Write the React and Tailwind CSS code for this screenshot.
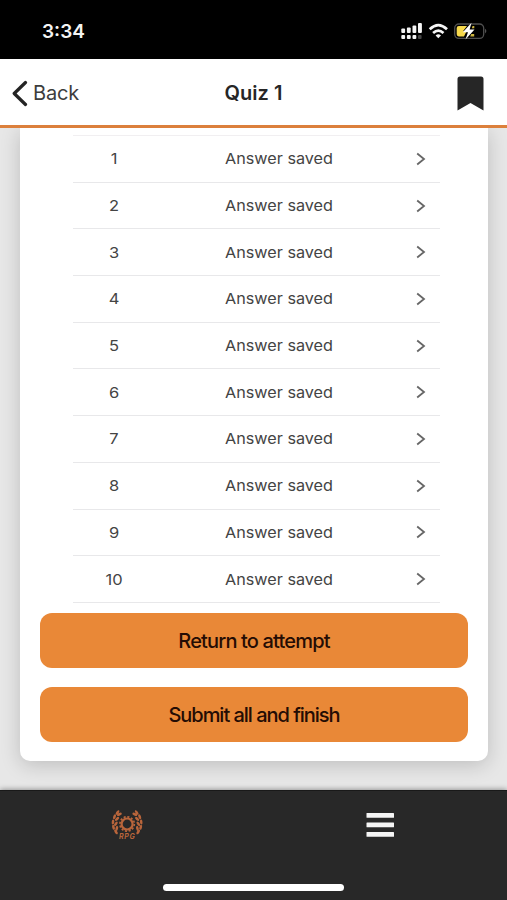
import React from "react";

const rows = [1, 2, 3, 4, 5, 6, 7, 8, 9, 10];

function StatusBar() {
  return (
    <div className="flex h-[59px] shrink-0 items-center justify-between bg-black pl-[42px] pr-[20px] pt-[3px]">
      <span className="pt-[2px] text-[19px] font-semibold leading-6 text-[#f4f4f4]">3:34</span>
      <svg width="87" height="20" viewBox="400 21 87 20">
        <g fill="#f5f5f5">
          <rect x="401.3" y="28.6" width="3.8" height="4.4" rx="1" />
          <rect x="406.9" y="27.4" width="3.8" height="5.6" rx="1" />
          <rect x="412.5" y="25.4" width="3.8" height="7.6" rx="1" />
          <rect x="418" y="23" width="3.9" height="10" rx="1" />
          <rect x="401.3" y="35" width="3.8" height="4" rx="1" />
          <rect x="406.9" y="35" width="3.8" height="4" rx="1" />
          <rect x="412.5" y="35" width="3.8" height="4" rx="1" />
        </g>
        <rect x="418" y="35" width="3.6" height="4" rx="1" fill="#444" />
        <g fill="none" stroke="#f5f5f5" strokeWidth="2.7">
          <path d="M429.7 29.2 Q438.3 21 447 29.2" />
          <path d="M433.1 33 Q438.3 28.3 443.5 33" />
        </g>
        <path d="M435.6 35.4 Q438.3 33 441 35.4 L438.3 38.2Z" fill="#f5f5f5" />
        <rect x="454.7" y="24" width="29" height="14.4" rx="4.2" fill="none" stroke="#505050" strokeWidth="1.3" />
        <path d="M485.3 28.8 Q487.2 31 485.3 33.5Z" fill="#777" />
        <path d="M458.8 26 H467 L463 31.2 H466.5 L464 36.4 H458.8 Q456.7 36.4 456.7 34.3 V28 Q456.7 26 458.8 26Z" fill="#f7d94c" />
        <path d="M472.5 26h1.8v2.2h-2.4zM471.2 34h3v2.4h-4z" fill="#cdb53f" />
        <path d="M471.5 22.8 L462.8 32.2 H468 L465.5 39.4 L474.5 29.6 H469.6Z" fill="#fff" />
      </svg>
    </div>
  );
}

function Header() {
  return (
    <header className="grid h-[69px] shrink-0 grid-cols-3 items-center border-b-[3px] border-[#dc803c] bg-white pt-[2px]">
      <div className="flex items-center gap-[5px] pl-[12px]">
        <svg width="16" height="27" viewBox="0 0 16 27" fill="none" stroke="#242424" strokeWidth="3.2" strokeLinecap="round" strokeLinejoin="round">
          <path d="M13.5 2.5 L2.2 13.5 L13.5 24.5" />
        </svg>
        <span className="text-[20px] leading-6 tracking-[-0.2px] text-[#3d3d3d]">Back</span>
      </div>
      <h1 className="text-center text-[20px] font-semibold leading-6 text-[#262626]">Quiz 1</h1>
      <svg className="mr-[23px] justify-self-end" width="27" height="35" viewBox="0 0 27 35">
        <path d="M3 0.5 H24 Q26.5 0.5 26.5 3 V34.5 L13.5 27 L0.5 34.5 V3 Q0.5 0.5 3 0.5Z" fill="#262626" />
      </svg>
    </header>
  );
}

function AttemptRow({ number }) {
  return (
    <li className="grid h-[46.7px] grid-cols-[82px_248px_1fr] items-center border-b-[1.4px] border-[#e8e8ea] text-[15px] leading-5 text-[#444]">
      <span className="scale-x-[1.1] pt-[1px] text-center">{number}</span>
      <span className="scale-x-[1.08] pt-[1px] text-center">Answer saved</span>
      <svg className="ml-[13px]" width="10" height="14" viewBox="0 0 10 14" fill="none" stroke="#666" strokeWidth="1.8">
        <path d="M1.2 1.5 L8 7 L1.2 12.5" />
      </svg>
    </li>
  );
}

function ActionButton({ children, tracking }) {
  return (
    <button className={`h-[55px] w-full rounded-[12px] bg-[#e98837] pt-[1px] text-[20px] font-medium leading-6 text-[#240c04] ${tracking}`}>
      {children}
    </button>
  );
}

function LaurelLogo() {
  const leaves = [
    [117.5, 812.5, 35], [114.5, 816.8, 20], [113, 822, 5], [113.5, 827.3, -15], [116, 832, -35],
    [119.4, 814.3, 65], [117, 818.9, 50], [115.9, 823.8, 35], [116.8, 828.4, 15],
  ];
  const wreath = leaves.map(([x, y, a]) => (
    <ellipse key={x + "-" + y} cx={x} cy={y} rx="1.3" ry="2.6" transform={`rotate(${a} ${x} ${y})`} />
  ));
  return (
    <svg width="34" height="34" viewBox="110 808 34 34" fill="#b9653b">
      <g>{wreath}</g>
      <g transform="translate(254.2 0) scale(-1 1)">{wreath}</g>
      <circle cx="127.1" cy="824" r="5.5" fill="none" stroke="#b9653b" strokeWidth="2.2" />
      <circle cx="127.1" cy="824" r="7.2" fill="none" stroke="#b9653b" strokeWidth="1.7" strokeDasharray="2.1 1.67" />
      <text x="127.3" y="839.4" textAnchor="middle" fontSize="7" fontWeight="700" fontStyle="italic" letterSpacing="0.7">RPG</text>
    </svg>
  );
}

function TabBar() {
  return (
    <nav className="flex h-[110px] shrink-0 flex-col items-center justify-between border-t border-[#191919] bg-[#282828] pb-[9px] shadow-[0_-1px_5px_rgba(0,0,0,0.35)]">
      <div className="grid w-full grid-cols-2 justify-items-center pt-[17px]">
        <LaurelLogo />
        <svg className="mt-[3px]" width="28" height="28" viewBox="0 0 28 28" fill="#f5f5f5">
          <rect x="0.5" y="2" width="27.5" height="4.7" rx="0.5" />
          <rect x="0.5" y="11.5" width="27.5" height="4.7" rx="0.5" />
          <rect x="0.5" y="21" width="27.5" height="4.7" rx="0.5" />
        </svg>
      </div>
      <div className="h-[7px] w-[181px] rounded-full bg-white" />
    </nav>
  );
}

export default function App() {
  return (
    <div className="flex h-[900px] w-[507px] flex-col overflow-hidden bg-[#e7e7e7] font-['Inter','Liberation_Sans',sans-serif]">
      <StatusBar />
      <Header />
      <main className="min-h-0 flex-1 overflow-hidden pl-[20.3px] pr-[19.3px]">
        <section className="h-[633px] rounded-b-[10px] bg-white px-[19.5px] pt-[7px] shadow-[0_4px_20px_rgba(0,0,0,0.18)]">
          <ul className="ml-[33px] mr-[28px] border-t border-[#f1eff1]">
            {rows.map((n) => (
              <AttemptRow key={n} number={n} />
            ))}
          </ul>
          <div className="mt-[9.8px] flex flex-col gap-[19.3px]">
            <ActionButton tracking="tracking-[-0.84px]">Return to attempt</ActionButton>
            <ActionButton tracking="tracking-[-1.02px]">Submit all and finish</ActionButton>
          </div>
        </section>
      </main>
      <TabBar />
    </div>
  );
}
